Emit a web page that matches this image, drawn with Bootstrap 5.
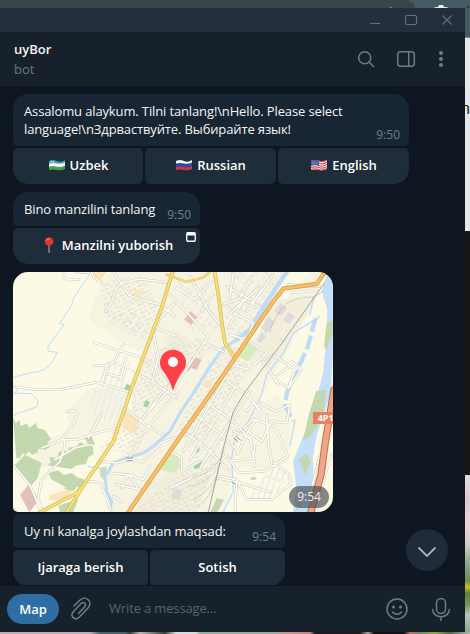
<!DOCTYPE html>
<html lang="uz">
<head>
<meta charset="utf-8">
<meta name="viewport" content="width=device-width, initial-scale=1">
<title>uyBor</title>
<link href="https://cdn.jsdelivr.net/npm/bootstrap@5.3.0/dist/css/bootstrap.min.css" rel="stylesheet">
<style>
body{width:470px;height:634px;font-family:"Open Sans","Noto Sans",sans-serif;font-size:13px;line-height:18px;color:#f5f5f5;background:#0e1621}
svg{display:block;flex:none}
.desk-top{height:8px;background:#394649}
.desk-mid{height:624px}
.desk-foot{height:2px;background:linear-gradient(90deg,#b9aeb4 0 90px,#4d6264 100px 125px,#303c35 130px,#bfb7b5 140px,#34402f 165px,#d8dcdb 176px 196px,#9aaba0 200px 275px,#cf8f83 290px,#c08679 310px,#201a1c 315px 360px,#a8a39b 368px,#150f12 374px 404px,#c86d60 410px,#74856b 420px,#9aa834 435px,#536746 450px,#b2b9ae 470px)}
.win{width:465px;background:#0e1621}
.desk-side{width:5px}
.side-a{height:30px;background:#455a61;border-bottom:1px solid #77868b}
.side-b{height:193px;background:#e5e8eb;color:#222;font:16px/18px "Liberation Sans",sans-serif;padding-top:62px}
.side-b span{display:block;margin-left:-4px}
.side-c{height:244px;background:#171717}
.side-d{height:157px;background:linear-gradient(#dcdfe1,#dfc9d3 25px,#edd1da 50px,#c9cfc9 70px,#8aa184 90px,#728c56 106px,#c3c219 112px,#617f38 118px,#79965a 130px,#b9c5bb 140px,#8ca58d)}
.titlebar{height:24px;background:#242f3d;color:#66717d}
.chat-head{height:54px;background:#17212b;padding:7px 14px 0;color:#6f7c88}
.chat-name{font-weight:600;color:#f5f5f5;line-height:20px}
.chat-sub{color:#6d7883;line-height:20px}
.chat-body{height:499px;padding:8px 13px 0}
.msg{background:#182533;border-radius:15px 15px 5px 5px;padding:8px 9px 8px 11px;letter-spacing:-.13px}
.msg.joined{border-top-left-radius:5px;letter-spacing:-.1px}
.stamp{font-size:12px;line-height:14px;color:#6d7f8f;letter-spacing:0}
.stamp-low{margin-bottom:-4px}
.w-lang{width:396px}.w-addr{width:187px}.w-goal{width:272px}
.keys{gap:2px;margin-top:2px}
.key{height:36px;background:#1f2c39;border-radius:5px;font-weight:600;color:#fff;border:0;padding:0 0 2px;font-size:13px;line-height:18px}
.key:first-child{border-bottom-left-radius:15px}
.key:last-child{border-bottom-right-radius:15px}
.key-first{flex:0 0 130px}
.gap-msg{margin-top:8px}
.map-box{width:320px;height:240px;border-radius:15px 15px 15px 5px;overflow:hidden}
.map-time{right:4px;bottom:4px;width:40px;height:22px;border-radius:11px;background:rgba(75,80,82,.68);color:#eee;font-size:12px;line-height:22px;text-align:center}
.web-mark{right:4px;top:4px}
.down-btn{left:406px;top:521px;width:42px;height:42px;background:#1f2b39}
.composer{height:47px;background:#17212b;border-top:1px solid #0d151e;padding-left:7px;color:#6f7c88}
.map-pill{width:52px;height:30px;background:#2f6ea5;border-radius:15px;color:#fff;font-weight:600}
.hint{color:#58636e;margin-left:17px;width:276px;padding-bottom:2px;letter-spacing:-.15px}
.st{fill:none;stroke-linecap:round;stroke-linejoin:round}
</style>
</head>
<body class="m-0 overflow-hidden">
<div class="desk-top d-flex justify-content-end">
<svg width="120" height="8" viewBox="350 0 120 8"><path d="M407 0q8 2 8 8h55V0z" fill="#455a61"/><path d="M391 7v1" stroke="#bbb"/><path d="M434 8q0-1 4-1l1-2h4l1 2q4 0 4 1z" fill="#eee"/><path d="M467 6h2v2h-2z" fill="#26343a"/></svg>
</div>
<div class="desk-mid d-flex">
<main class="win position-relative">
  <div class="titlebar">
    <svg width="465" height="24" viewBox="0 8 465 24" fill="none" stroke="currentColor" stroke-width="1.1"><path d="M370 23.5h10"/><rect x="405.5" y="15.500" width="11" height="9" rx="1.5"/><path d="m442.500 15.500 9 9m0-9-9 9"/></svg>
  </div>
  <header class="chat-head d-flex justify-content-between">
    <div><div class="chat-name">uyBor</div><div class="chat-sub">bot</div></div>
    <svg width="94" height="30" viewBox="357 39 94 30" fill="none" stroke="currentColor" stroke-width="1.5"><circle cx="364.700" cy="57.700" r="6"/><path d="m369 62 5 5"/><rect x="397.700" y="51.700" width="16.600" height="14.600" rx="3"/><path d="M408.700 52v14"/><g fill="currentColor" stroke="none"><circle cx="441" cy="53" r="2"/><circle cx="441" cy="59" r="2"/><circle cx="441" cy="65" r="2"/></g></svg>
  </header>
  <section class="chat-body overflow-hidden">
    <div class="w-lang">
      <div class="msg d-flex justify-content-between"><div class="text-nowrap">Assalomu alaykum. Tilni tanlang!\nHello. Please select<br>language!\nЗдрваствуйте. Выбирайте язык!</div><span class="stamp align-self-end" style="margin-bottom:-4px">9:50</span></div>
      <div class="keys d-flex">
        <button class="key key-first d-flex align-items-center justify-content-center gap-1"><svg width="18" height="14" viewBox="0 0 18 14"><path d="M1 3q4-2 8 0t8-1v4q-4 2-8 1t-8-1z" fill="#12a7b6"/><path d="M1 5q4-1 8 0t8-1v4q-4 2-8 1t-8 0z" fill="#f7f7f7"/><path d="M1 9q4-1 8 0t8-1v3q-4 2-8 1t-8 0z" fill="#38a64a"/><path d="M1 5.500q4-1 8 0t8-1M1 9q4-1 8 0t8-1" fill="none" stroke="#c87b78" stroke-width=".5"/><path d="M2.500 3.500h1m1 0h1" stroke="#fff"/></svg>Uzbek</button>
        <button class="key w-100 d-flex align-items-center justify-content-center gap-1"><svg width="18" height="14" viewBox="0 0 18 14"><path d="M1 3q4-2 8 0t8-1v4q-4 2-8 1t-8-1z" fill="#f2f2f2"/><path d="M1 5.500q4-1 8 0t8-1v4q-4 2-8 1t-8 0z" fill="#244dab"/><path d="M1 9q4-1 8 0t8-1v3q-4 2-8 1t-8 0z" fill="#d53540"/></svg>Russian</button>
        <button class="key w-100 d-flex align-items-center justify-content-center gap-1"><svg width="18" height="14" viewBox="0 0 18 14"><path d="M1 3q4-2 8 0t8-1v9q-4 2-8 1t-8 0z" fill="#f2eeee"/><path d="M1 3q4-1.500 8 0t8-1M1 5.200q4-1.500 8 0t8-1M1 7.400q4-1.500 8 0t8-1M1 9.600q4-1.500 8 0t8-1M1 11.500q4-1.500 8 0t8-1" stroke="#d84a54" fill="none" stroke-width="1.100"/><path d="M1 3q4-2 8 0v5q-4-2-8-.5z" fill="#3b67a8"/><path d="M2 4.500h6M2 6h6" stroke="#9cb4d8" stroke-width=".6" stroke-dasharray="1 1"/></svg>English</button>
      </div>
    </div>
    <div class="w-addr gap-msg">
      <div class="msg d-flex justify-content-between"><span class="text-nowrap">Bino manzilini tanlang</span><span class="stamp stamp-low align-self-end">9:50</span></div>
      <div class="keys d-flex">
        <button class="key w-100 position-relative d-flex align-items-center justify-content-center gap-1"><svg width="18" height="18" viewBox="0 0 18 18"><path d="M9 9v8" stroke="#85898d" stroke-width="1.500"/><circle cx="9" cy="5.500" r="4.300" fill="#dd3531"/><path d="M6.500 4.500q1-2 3-1.500" stroke="#ff9b93" fill="none"/></svg>Manzilni yuborish
        <svg class="web-mark position-absolute" width="10" height="10" viewBox="0 0 10 10"><rect x=".75" y=".75" width="8.500" height="8.500" rx="1" fill="none" stroke="#fff" stroke-width="1.300"/><path d="M1 1h8v2.500H1z" fill="#fff"/></svg></button>
      </div>
    </div>
    <div class="map-box gap-msg position-relative">
<svg width="320" height="240" viewBox="9 12 960 720">
<defs>
<pattern id="streets" width="44" height="33" patternUnits="userSpaceOnUse" patternTransform="rotate(-55)"><path d="M0 3h44M3 0v33" stroke="#d3d0c3" stroke-width="7"/><path d="M0 3h44M3 0v33" stroke="#fff" stroke-width="4"/><path d="M12 14h9m8 0h8M12 25h6m8 0h10" stroke="#e0dcd0" stroke-width="5"/></pattern>
<pattern id="lanes" width="90" height="17" patternUnits="userSpaceOnUse" patternTransform="rotate(-72)"><path d="M0 3h90M3 0v17" stroke="#d0cec2" stroke-width="6"/><path d="M0 3h90M3 0v17" stroke="#fff" stroke-width="3.500"/></pattern>
<pattern id="houses" width="31" height="25" patternUnits="userSpaceOnUse" patternTransform="rotate(-28)"><path d="M3 5h13M22 16h7M5 18h9M22 3v7" stroke="#e0ddd5" stroke-width="4"/></pattern>
<g id="minor">
<path d="M162 12v18l15 6 28-2M245 12l5 15 23 16M310 12l30 44 16 25 43 16 57 15 39 34M286 130l20-30 10-35 20-20 50-12 85 10M438 177l60 28M410 240l40-90 45-45"/>
<path d="M253 224l145 46M340 230l-30 55-20 8-38-1M348 270l-18 65M290 290l-14 60M290 318l42 10M9 355l60 9 80 1 110-22 110 32M370 310l70 40 60 40"/>
<path d="M400 270l60 45 45 60M430 195l15 70-18 75M345 420l60 50 55 30M400 495l95-115M380 475l90-120M415 430l60-60"/>
<path d="M170 430l20-2 12 8-6 20-35 50 4 30-16 45-55 55-10 55 22 60M95 540l60-25h45l60-20 60-15M135 575l60-35 40-10M9 590l50 60 35 80M230 640l40 3 15 35 18 50M275 580l45 5 40-12 35 10 60-60 40-15M360 565l25-40M335 660l20-40 45 15 20-40M300 615l55 5 28 40M320 650l75 15M310 685l25 15M235 510l40-75"/>
<path d="M480 80l75 80 40 45-40 60-60 90M500 60l55 35 50-55M575 130l35-50M560 215l80 35M540 25l60 110 35 40M640 110l50-20 35-65M660 90l10-75M650 55l80 45 60-80M650 145l95-85M655 180l45-85 50 20M660 200l50 15 20-50-60-30M710 130l70-95M835 50l95 5M845 75l75-9"/>
<path d="M725 225l45 30-50 50-55-15M650 340l60 40 40 45M585 400l85 60 55 60M555 440l80 60 50 50M520 490l75 55 60 60M650 320l-130 230M720 370l-150 230M680 350l-140 225M480 550l35 20v40l55-30M480 660l130-60 40-40"/>
<path d="M680 560l45-90 30-35-25-30-20 25M750 405l50 25 40-20-10 55-45-5-30 60-55-40 30-25 65 20 38 90-72 45-75 5-30-45M670 490l50 20 15 85M770 440l5 90 10 55M660 580l70-10 5-35M790 585l50 35v30l-55 45h-75l-30-60-50-10"/>
<path d="M760 290l30-30 65 45-20 55-45-30 50-35M760 280l45 70M835 360l40-55-30-25"/>
<path d="M965 560l-20 60-25 110M930 560l-30 120M680 640l-5 90M620 630l60 12 100 30"/>
</g>
</defs>
<path fill="#fcfae5" d="M0 0h980v740H0z"/>
<path fill="#f6f3e1" d="M275 35l30-23h185l120-5h220L725 210 480 560 355 735H300l-25-90 45-60 60-95-15-45 5-85 40-100-60-25-115-80zM900 12h30l-15 90-140 250-80 110-50 270H355l265-390zM240 360h130l-50 110-120 40-100 90-45-10 60-80 65-20-10-60zM700 440l100-60 40 50-5 150-60 30-90-10z"/>
<path fill="#f2eedb" d="M790 100l130-20-30 60-110 160-60-35zM490 180l65 45-50 60-60-20zM480 610l125 10-50 115H370l50-90z"/>
<path fill="url(#houses)" d="M270 45l120-25 55 90-35 110-120-60zM390 290l105-80 110 30-150 150-100 70zM595 280l90-60 50 60-160 240-80-20zM310 490l120-20-60 90-100-20zM480 640l150-90-70 180H370z"/>
<path fill="url(#streets)" d="M670 400l-155 130 60 55 85-45 50-100-40-80zM660 12h170L720 205l-60 5-15-75zM490 20l100 30 35 130-85 5zM280 150l100-20 35 55-35 35z" opacity=".7"/>
<path fill="url(#lanes)" d="M250 360h115l-30 120-70-30-30-40zM290 280l80 5-20 75h-90zM790 588l50 35-55 75h-80z"/>
<g fill="#f9e4bc"><path d="M245 12h45l-20 28-22-8zM375 65l25 5-10 16-18-4zM345 430l45 20-15 50-40-20zM120 680l80-22-45 42-40-5zM600 455l15 5-10 25-20-8zM585 335l24 6-8 19-20-4z"/></g>
<g fill="#c3d8af"><path d="M9 450l9 16 10-10 4 18 18-8 8 14 20-16 4 16 22 6 20 28-12 8 8 16-16 8-17-4-7 14-14 4-10-10-8 10-10-4-7 14h-12zM45 560l50 25-12 45-20 25-52-60zM112 592l10-10-4-15 23 2 6-18 26-2 4-12 20 2 13-18 20 14 18-2 3 25-16 10-8 20-30 5-12 10zM115 615l30-8 15 14 25-6 18 14 18 4 8 20-30 5-8 12-32-8-45 12 55-15-45-25zM218 505l25-5 12 30-20-2zM145 713l60-20-15 39h-40z"/><path fill="#c8deb8" d="M270 600l20-5-5 45-15-15z"/><path fill="#9ed5a2" d="M350 348l15 6-9 18-15-6zM407 396l12 5-7 18-12-5zM552 588l24-5v16l-24 4zM558 535l12 7-7 13-10-5z"/><path fill="#d6edbb" d="M480 555l28 15 2 30-15 15-50-10zM710 220l34 25-35 35-30-20z"/><path d="M725 627h12v8h-16zM620 690l22 5-20 37h-20z"/></g>
<g fill="#e4c0bd"><path d="M30 680l28-32 28 48-28 37zM542 130l20 17-18 24-21-16zM550 265l25 10-15 30-18-5-8 12-10-8z"/></g>
<g fill="#dfdbdc"><path d="M810 105l22 15-20 25-18-14zM835 133l20 12-18 23-18-13zM773 145l22 18-25 33-16-16zM755 193l14 12-18 20-12-10zM490 660l25 8-5 28-26-4z"/></g>
<g class="st" stroke="#bedcf5"><path stroke-width="3" d="M195 15l45 2-20 30-30 45-5 20-37 55 14 3-48 65v14l28 4-15 28q-20 32-60 32L9 328M9 350l15 15-15 15M9 375l55 2 20 20-4 20-60 20-11 8"/><path stroke-width="14" d="M830 12l-65 98-45 75-40 30"/><path stroke-width="9" d="M680 215l-40 25-40 55-50 80M560 360l-50 75-30 55-45 40-35 25-50 15-40 15-25 40 5 45 15 30-5 22"/><path stroke-width="4" d="M930 145l-80 50-30 60-50 65-15 60-40 80-40 50-10 60 5 100-30 62M235 595l55 10M900 140l10-50 40-30"/><path stroke-width="13" stroke-linecap="butt" stroke-dasharray="43 12" d="M917 150l-25 90-60 130-8 40 25 50"/><path stroke-width="4" d="M855 455l-15 80"/></g>
<path d="M950 20l18-8v250l-6 115-42 125-12 70 6 110-20 50h-45l10-72-10-80 35-85 25-60 30-120 10-100 3-90-17-55z" fill="#c4dff7"/>
<path d="M950 165l18-10v40l-18 50-8-10zM918 370l30-5-8 80-38 60-23 12 18-80zM866 575l25-20 10 30-15 35zM860 700l18 10-20 20z" fill="#c3d8af"/>
<use href="#minor" class="st" stroke="#d0cdc1" stroke-width="8"/>
<use href="#minor" class="st" stroke="#fffef9" stroke-width="4.500"/>
<g class="st" stroke="#a4a29d" stroke-width="3" stroke-dasharray="7 2"><path d="M943 45L820 220 705 372l-35 58-30 110-45 192"/><path stroke-width="2.500" stroke-dasharray="3 3" stroke-linecap="butt" d="M915 88q-70-5-100 35t-35 70M642 548q-20 60-95 80M635 585q-35 55-90 70M626 610q-25 60-75 85M620 630q-20 60-60 90M820 220l-12-10"/></g>
<g class="st"><g stroke="#d6b456" stroke-width="11"><path id="y1" d="M490 5l-35 113-45 122-45 120-20 60-20 55-15 45-40 60-35 50-70 110M80 738l120-63 12-15M612 0l16 100 7 60 10 65 30 45"/></g><path stroke="#d6b456" stroke-width="7" d="M470 20l60 22 50-14 25-20"/><g stroke="#f7df78" stroke-width="7"><path d="M490 5l-35 113-45 122-45 120-20 60-20 55-15 45-40 60-35 50-70 110M80 738l120-63 12-15M612 0l16 100 7 60 10 65 30 45"/></g><path stroke="#f7df78" stroke-width="4.500" d="M470 20l60 22 50-14 25-20"/>
<path stroke="#dc9f4d" stroke-width="13" d="M950 5l-30 43-100 14-30 38-115 170-65 95-130 185-130 190"/><path stroke="#f9bf69" stroke-width="8" d="M950 5l-30 43-100 14-30 38-115 170-65 95-130 185-130 190"/>
<path stroke="#c66e4c" stroke-width="22" d="M972 365l-27 165-12 90-35 130"/><path stroke="#eba788" stroke-width="16" d="M972 365l-27 165-12 90-35 130"/></g>
<path d="M350 570h18m-18 8h18M672 510l12 12m-3-16 12 12M665 640l10 8" stroke="#999" stroke-width="3"/>
<path d="M909 432h65v36h-65z" fill="#e9835d"/><text x="923" y="460" font-size="27" font-weight="700" fill="#fff" font-family="Open Sans, sans-serif">4P1</text>
<path d="M489 368q-11-34-29-58a39 39 0 1 1 58 0q-18 24-29 58z" fill="#ff4146"/><circle cx="489" cy="282" r="15" fill="#fff"/>
</svg>
      <span class="map-time position-absolute">9:54</span>
    </div>
    <div class="w-goal" style="margin-top:2px">
      <div class="msg joined d-flex justify-content-between"><span class="text-nowrap">Uy ni kanalga joylashdan maqsad:</span><span class="stamp stamp-low align-self-end">9:54</span></div>
      <div class="keys d-flex"><button class="key w-100">Ijaraga berish</button><button class="key w-100">Sotish</button></div>
    </div>
  </section>
  <button class="down-btn position-absolute rounded-circle border-0 p-0 d-flex align-items-center justify-content-center" aria-label="Down"><svg class="mt-1" width="20" height="14" viewBox="0 0 20 14" fill="none" stroke="#aab3b8" stroke-width="1.800"><path d="m1.500 2.500 8.500 8.500 8.500-8.500"/></svg></button>
  <footer class="composer d-flex align-items-center">
    <div class="map-pill d-flex align-items-center justify-content-center">Map</div>
    <svg class="ms-2" width="25" height="26" viewBox="67 596 25 26" fill="none" stroke="currentColor" stroke-width="1.500" stroke-linecap="round"><path d="m74 606 5.500-5.500c6-6 14 1 8.500 7.500l-8.500 9c-4.500 4.500-10-1-6-5.500l7.500-8c3-2.500 6 .5 3.500 3.500l-6 6.500"/></svg>
    <span class="hint">Write a message...</span>
    <svg width="66" height="28" viewBox="385 595 66 28" fill="none" stroke="currentColor" stroke-width="1.500" stroke-linecap="round"><circle cx="397" cy="609" r="10"/><path d="M392.500 612q4.500 4.500 9 0"/><circle cx="393.500" cy="607" r="1.500" fill="currentColor" stroke="none"/><circle cx="400.500" cy="607" r="1.500" fill="currentColor" stroke="none"/><rect x="436.500" y="598.500" width="9" height="15" rx="4.500"/><path d="M432.700 609.500c0 9.500 16.600 9.500 16.600 0M441 617v3.500"/></svg>
  </footer>
</main>
<aside class="desk-side overflow-hidden"><div class="side-a"></div><div class="side-b"><span>n</span></div><div class="side-c"></div><div class="side-d"></div></aside>
</div>
<div class="desk-foot"></div>
<script src="https://cdn.jsdelivr.net/npm/bootstrap@5.3.0/dist/js/bootstrap.bundle.min.js"></script>
</body>
</html>
